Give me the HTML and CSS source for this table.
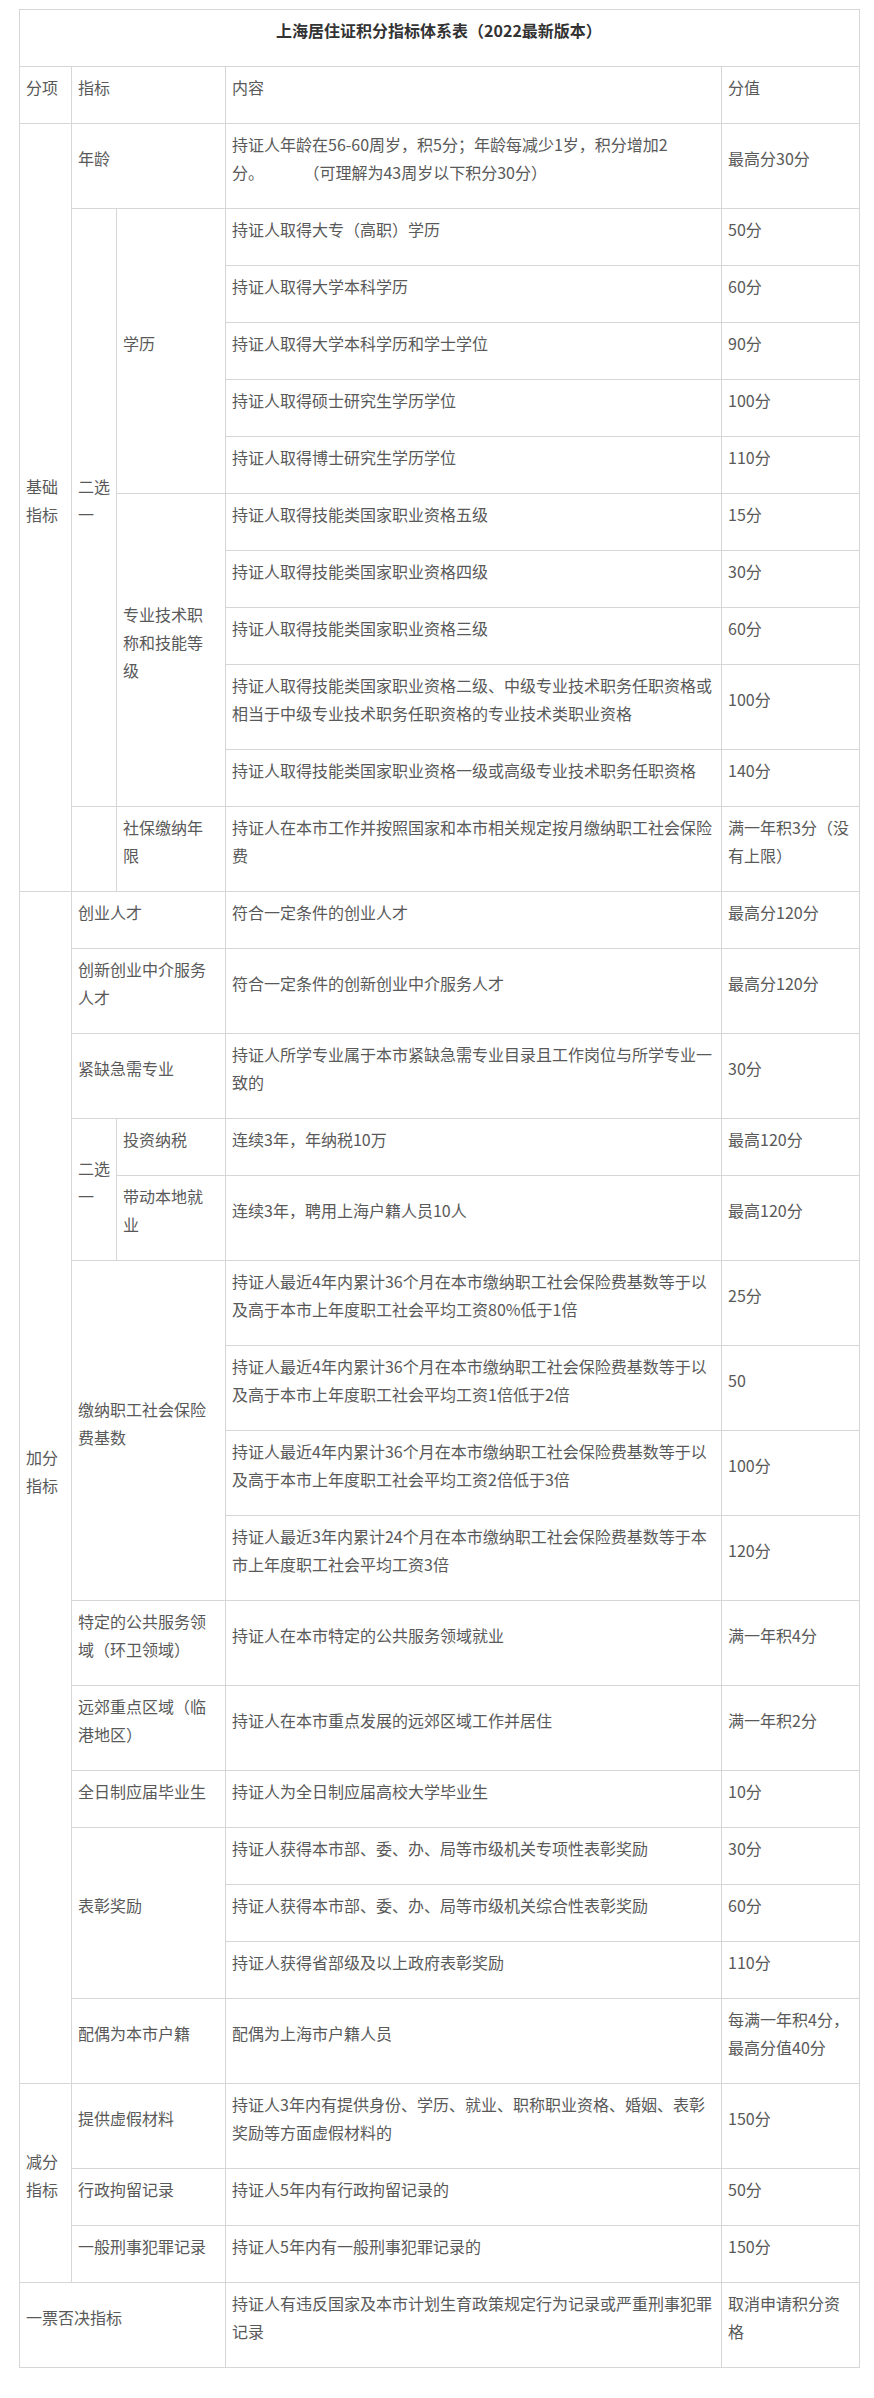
FILE: index.html
```html
<!DOCTYPE html>
<html lang="zh-CN">
<head>
<meta charset="utf-8">
<title>上海居住证积分指标体系表</title>
<link rel="stylesheet" href="styles.css">
</head>
<body>
<div class="page">
<table class="score">
<colgroup>
<col class="c-a"><col class="c-b"><col class="c-c"><col class="c-d"><col class="c-e">
</colgroup>
<tbody>
<tr><td colspan="5" class="title">上海居住证积分指标体系表（2022最新版本）</td></tr>
<tr><td>分项</td><td colspan="2">指标</td><td>内容</td><td>分值</td></tr>

<tr><td rowspan="12">基础指标</td><td colspan="2">年龄</td><td>持证人年龄在56-60周岁，积5分；年龄每减少1岁，积分增加2分。&nbsp;&nbsp;&nbsp;&nbsp;&nbsp;&nbsp;&nbsp;&nbsp;&nbsp;&nbsp;&nbsp;（可理解为43周岁以下积分30分）</td><td>最高分30分</td></tr>
<tr><td rowspan="10" class="nb">二选一</td><td rowspan="5" class="nc">学历</td><td>持证人取得大专（高职）学历</td><td>50分</td></tr>
<tr><td>持证人取得大学本科学历</td><td>60分</td></tr>
<tr><td>持证人取得大学本科学历和学士学位</td><td>90分</td></tr>
<tr><td>持证人取得硕士研究生学历学位</td><td>100分</td></tr>
<tr><td>持证人取得博士研究生学历学位</td><td>110分</td></tr>
<tr><td rowspan="5" class="nc">专业技术职称和技能等级</td><td>持证人取得技能类国家职业资格五级</td><td>15分</td></tr>
<tr><td>持证人取得技能类国家职业资格四级</td><td>30分</td></tr>
<tr><td>持证人取得技能类国家职业资格三级</td><td>60分</td></tr>
<tr><td>持证人取得技能类国家职业资格二级、中级专业技术职务任职资格或相当于中级专业技术职务任职资格的专业技术类职业资格</td><td>100分</td></tr>
<tr><td>持证人取得技能类国家职业资格一级或高级专业技术职务任职资格</td><td>140分</td></tr>
<tr><td class="nb"></td><td class="nc">社保缴纳年限</td><td>持证人在本市工作并按照国家和本市相关规定按月缴纳职工社会保险费</td><td>满一年积3分（没有上限）</td></tr>

<tr><td rowspan="16" class="shift">加分指标</td><td colspan="2">创业人才</td><td>符合一定条件的创业人才</td><td>最高分120分</td></tr>
<tr><td colspan="2">创新创业中介服务人才</td><td>符合一定条件的创新创业中介服务人才</td><td>最高分120分</td></tr>
<tr><td colspan="2">紧缺急需专业</td><td>持证人所学专业属于本市紧缺急需专业目录且工作岗位与所学专业一致的</td><td>30分</td></tr>
<tr><td rowspan="2" class="nb">二选一</td><td class="nc">投资纳税</td><td>连续3年，年纳税10万</td><td>最高120分</td></tr>
<tr><td class="nc">带动本地就业</td><td>连续3年，聘用上海户籍人员10人</td><td>最高120分</td></tr>
<tr><td colspan="2" rowspan="4">缴纳职工社会保险费基数</td><td>持证人最近4年内累计36个月在本市缴纳职工社会保险费基数等于以及高于本市上年度职工社会平均工资80%低于1倍</td><td>25分</td></tr>
<tr><td>持证人最近4年内累计36个月在本市缴纳职工社会保险费基数等于以及高于本市上年度职工社会平均工资1倍低于2倍</td><td>50</td></tr>
<tr><td>持证人最近4年内累计36个月在本市缴纳职工社会保险费基数等于以及高于本市上年度职工社会平均工资2倍低于3倍</td><td>100分</td></tr>
<tr><td>持证人最近3年内累计24个月在本市缴纳职工社会保险费基数等于本市上年度职工社会平均工资3倍</td><td>120分</td></tr>
<tr><td colspan="2">特定的公共服务领域（环卫领域）</td><td>持证人在本市特定的公共服务领域就业</td><td>满一年积4分</td></tr>
<tr><td colspan="2">远郊重点区域（临港地区）</td><td>持证人在本市重点发展的远郊区域工作并居住</td><td>满一年积2分</td></tr>
<tr><td colspan="2">全日制应届毕业生</td><td>持证人为全日制应届高校大学毕业生</td><td>10分</td></tr>
<tr><td colspan="2" rowspan="3">表彰奖励</td><td>持证人获得本市部、委、办、局等市级机关专项性表彰奖励</td><td>30分</td></tr>
<tr><td>持证人获得本市部、委、办、局等市级机关综合性表彰奖励</td><td>60分</td></tr>
<tr><td>持证人获得省部级及以上政府表彰奖励</td><td>110分</td></tr>
<tr><td colspan="2">配偶为本市户籍</td><td>配偶为上海市户籍人员</td><td>每满一年积4分，最高分值40分</td></tr>

<tr><td rowspan="3">减分指标</td><td colspan="2">提供虚假材料</td><td>持证人3年内有提供身份、学历、就业、职称职业资格、婚姻、表彰奖励等方面虚假材料的</td><td>150分</td></tr>
<tr><td colspan="2">行政拘留记录</td><td>持证人5年内有行政拘留记录的</td><td>50分</td></tr>
<tr><td colspan="2">一般刑事犯罪记录</td><td>持证人5年内有一般刑事犯罪记录的</td><td>150分</td></tr>

<tr><td colspan="3">一票否决指标</td><td>持证人有违反国家及本市计划生育政策规定行为记录或严重刑事犯罪记录</td><td>取消申请积分资格</td></tr>
</tbody>
</table>
</div>
</body>
</html>
```

FILE: styles.css
```css
html, body {
  margin: 0;
  padding: 0;
  background: #ffffff;
}

.page {
  padding: 9px 0 0 19px;
  font-family: "Noto Sans CJK SC", "Noto Sans", sans-serif;
  font-size: 16px;
  line-height: 28px;
  color: #595959;
}

.score {
  border-collapse: collapse;
  table-layout: fixed;
  width: 840px;
}

.c-a { width: 52px; }
.c-b { width: 45px; }
.c-c { width: 109px; }
.c-d { width: 496px; }
.c-e { width: 138px; }

.score td {
  border: 1px solid #d6d6d6;
  padding: 6px 7px 22px 6px;
  vertical-align: middle;
  text-align: left;
  word-break: break-all;
}

.score td.title {
  text-align: center;
  font-weight: bold;
  color: #333333;
}

.score td.nb {
  padding-right: 5px;
}

.score td.nc {
  padding-right: 8px;
}

.score td.shift {
  padding-bottom: 40px;
}
```
